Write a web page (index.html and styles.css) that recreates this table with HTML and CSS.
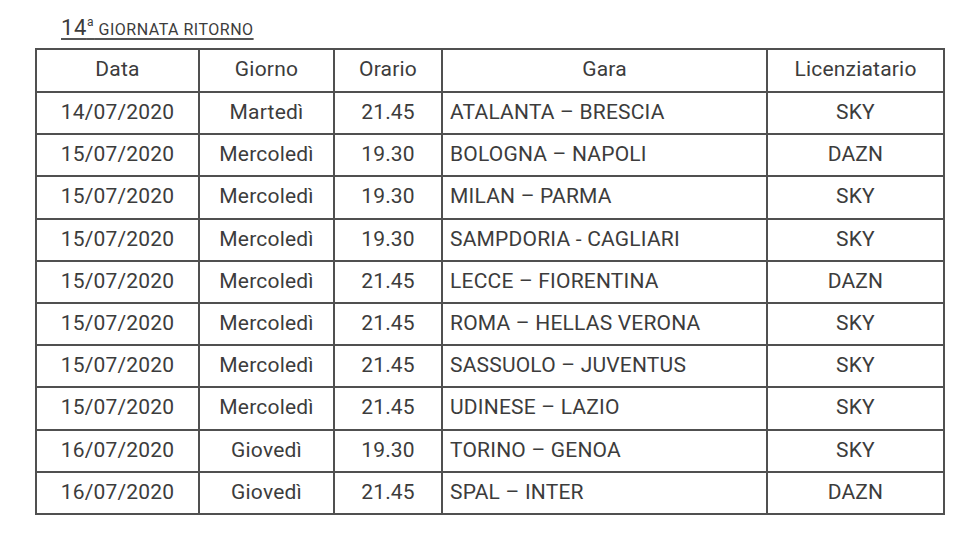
FILE: index.html
```html
<!DOCTYPE html>
<html>
<head>
<meta charset="utf-8">
<link rel="stylesheet" href="styles.css">
</head>
<body>
<div class="page">
  <div class="title"><span class="num">14<sup>a</sup></span> GIORNATA RITORNO</div>
  <table class="sched">
    <colgroup>
      <col class="c1"><col class="c2"><col class="c3"><col class="c4"><col class="c5">
    </colgroup>
    <thead>
      <tr><th>Data</th><th>Giorno</th><th>Orario</th><th>Gara</th><th>Licenziatario</th></tr>
    </thead>
    <tbody>
      <tr><td>14/07/2020</td><td>Martedì</td><td>21.45</td><td class="gara">ATALANTA – BRESCIA</td><td>SKY</td></tr>
      <tr><td>15/07/2020</td><td>Mercoledì</td><td>19.30</td><td class="gara">BOLOGNA – NAPOLI</td><td>DAZN</td></tr>
      <tr><td>15/07/2020</td><td>Mercoledì</td><td>19.30</td><td class="gara">MILAN – PARMA</td><td>SKY</td></tr>
      <tr><td>15/07/2020</td><td>Mercoledì</td><td>19.30</td><td class="gara">SAMPDORIA - CAGLIARI</td><td>SKY</td></tr>
      <tr><td>15/07/2020</td><td>Mercoledì</td><td>21.45</td><td class="gara">LECCE – FIORENTINA</td><td>DAZN</td></tr>
      <tr><td>15/07/2020</td><td>Mercoledì</td><td>21.45</td><td class="gara">ROMA – HELLAS VERONA</td><td>SKY</td></tr>
      <tr><td>15/07/2020</td><td>Mercoledì</td><td>21.45</td><td class="gara">SASSUOLO – JUVENTUS</td><td>SKY</td></tr>
      <tr><td>15/07/2020</td><td>Mercoledì</td><td>21.45</td><td class="gara">UDINESE – LAZIO</td><td>SKY</td></tr>
      <tr><td>16/07/2020</td><td>Giovedì</td><td>19.30</td><td class="gara">TORINO – GENOA</td><td>SKY</td></tr>
      <tr><td>16/07/2020</td><td>Giovedì</td><td>21.45</td><td class="gara">SPAL – INTER</td><td>DAZN</td></tr>
    </tbody>
  </table>
</div>
</body>
</html>
```

FILE: styles.css
```css
html, body {
  margin: 0;
  padding: 0;
  background: #ffffff;
}
body {
  font-family: Roboto, "Liberation Sans", sans-serif;
  color: #3c3c3c;
}
.page {
  padding: 14px 0 0 35px;
}
.title {
  margin-left: 26px;
  display: inline-block;
  font-size: 16px;
  letter-spacing: 0.5px;
  text-decoration: underline;
  text-decoration-thickness: 2px;
  text-underline-offset: 3px;
  text-decoration-color: #555555;
  line-height: 28px;
  height: 28px;
}
.title .num {
  font-size: 22px;
  letter-spacing: 0.6px;
}
.title sup {
  font-size: 12px;
  vertical-align: 9px;
  line-height: 0;
}
.sched {
  margin-top: 6px;
  border-collapse: collapse;
  table-layout: fixed;
  width: 908px;
  font-size: 21px;
  letter-spacing: 0.2px;
}
.c1 { width: 163px; }
.c2 { width: 135px; }
.c3 { width: 108px; }
.c4 { width: 325px; }
.c5 { width: 177px; }
.sched th, .sched td {
  border: 2px solid #505050;
  height: 38.2px;
  padding: 0 0 2px 0;
  text-align: center;
  font-weight: normal;
  white-space: nowrap;
}
.sched th {
  height: 37px;
  padding-bottom: 4px;
}
.sched td.gara {
  text-align: left;
  padding-left: 7px;
}
```
